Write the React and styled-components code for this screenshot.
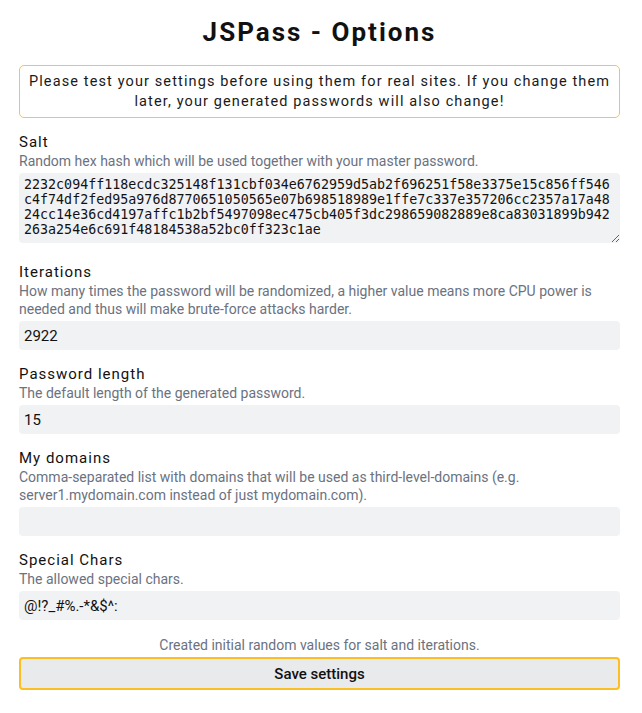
import React, { useState } from 'react';
import styled, { createGlobalStyle } from 'styled-components';

const GlobalStyle = createGlobalStyle`
  body {
    margin: 0;
    background: #ffffff;
    font-family: Roboto, "Noto Sans", Arial, sans-serif;
    color: #111111;
  }
`;

const Page = styled.div`
  display: flex;
  flex-direction: column;
  padding: 17px 22px 20px 19px;
`;

const Title = styled.h1`
  margin: 0 0 18px;
  font-size: 26px;
  line-height: 30px;
  font-weight: 700;
  letter-spacing: 2px;
  text-align: center;
`;

const Notice = styled.div`
  border: 1px solid #fcc43d;
  border-radius: 5px;
  padding: 6px 4px 6px;
  font-size: 14.5px;
  line-height: 19.5px;
  letter-spacing: 1.12px;
  text-align: center;
  color: #1a1a1a;
`;

const Field = styled.div`
  display: flex;
  flex-direction: column;
  margin-top: 14px;
`;

const Label = styled.label`
  display: block;
  font-size: 15px;
  line-height: 20px;
  letter-spacing: 1px;
  color: #111111;
`;

const Hint = styled.div`
  font-size: 14px;
  line-height: 18px;
  color: #6b7280;
  margin-bottom: 3px;
`;

const Input = styled.input`
  display: block;
  box-sizing: border-box;
  width: 100%;
  height: 29px;
  padding: 0 5px;
  border: none;
  border-radius: 4px;
  background: #f1f2f4;
  font-family: Roboto, "Noto Sans", Arial, sans-serif;
  font-size: 15px;
  color: #111111;
  outline: none;
`;

const HashArea = styled.textarea`
  display: block;
  box-sizing: border-box;
  width: 100%;
  height: 70px;
  margin-bottom: 5px;
  padding: 4px 5px;
  border: none;
  border-radius: 4px;
  background: #f1f2f4;
  font-family: "DejaVu Sans Mono", monospace;
  font-size: 13.333px;
  line-height: 15px;
  color: #111111;
  outline: none;
`;

const Status = styled.p`
  margin: 16px 0 3px;
  font-size: 14px;
  line-height: 18px;
  color: #6b7280;
  text-align: center;
`;

const SaveButton = styled.button`
  display: block;
  box-sizing: border-box;
  width: 100%;
  height: 33px;
  border: 2px solid #fbbf24;
  border-radius: 4px;
  background: #e9eaec;
  font-family: Roboto, "Noto Sans", Arial, sans-serif;
  font-size: 15px;
  font-weight: 500;
  color: #111111;
  cursor: pointer;
`;

const fields = [
  {
    key: 'iterations',
    label: 'Iterations',
    hint: 'How many times the password will be randomized, a higher value means more CPU power is needed and thus will make brute-force attacks harder.',
    value: '2922',
  },
  {
    key: 'length',
    label: 'Password length',
    hint: 'The default length of the generated password.',
    value: '15',
  },
  {
    key: 'domains',
    label: 'My domains',
    hint: 'Comma-separated list with domains that will be used as third-level-domains (e.g. server1.mydomain.com instead of just mydomain.com).',
    value: '',
  },
  {
    key: 'chars',
    label: 'Special Chars',
    hint: 'The allowed special chars.',
    value: '@!?_#%.-*&$^:',
  },
];

export default function App() {
  const [salt, setSalt] = useState(
    '2232c094ff118ecdc325148f131cbf034e6762959d5ab2f696251f58e3375e15c856ff546c4f74df2fed95a976d8770651050565e07b698518989e1ffe7c337e357206cc2357a17a4824cc14e36cd4197affc1b2bf5497098ec475cb405f3dc298659082889e8ca83031899b942263a254e6c691f48184538a52bc0ff323c1ae'
  );
  const [values, setValues] = useState(
    Object.fromEntries(fields.map((f) => [f.key, f.value]))
  );

  return (
    <Page>
      <GlobalStyle />
      <Title>JSPass - Options</Title>
      <Notice>
        Please test your settings before using them for real sites. If you change them later,
        your generated passwords will also change!
      </Notice>

      <Field>
        <Label>Salt</Label>
        <Hint>Random hex hash which will be used together with your master password.</Hint>
        <HashArea value={salt} onChange={(e) => setSalt(e.target.value)} spellCheck={false} />
      </Field>

      {fields.map((f) => (
        <Field key={f.key}>
          <Label>{f.label}</Label>
          <Hint>{f.hint}</Hint>
          <Input
            value={values[f.key]}
            onChange={(e) => setValues({ ...values, [f.key]: e.target.value })}
          />
        </Field>
      ))}

      <Status>Created initial random values for salt and iterations.</Status>
      <SaveButton>Save settings</SaveButton>
    </Page>
  );
}
